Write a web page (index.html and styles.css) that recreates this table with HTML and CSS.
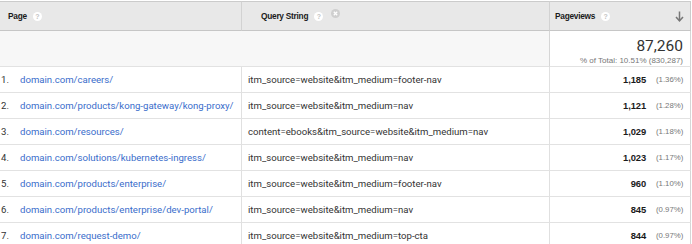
FILE: index.html
```html
<!DOCTYPE html>
<html>
<head>
<meta charset="utf-8">
<link rel="stylesheet" href="styles.css">
</head>
<body>
<div class="report">
  <div class="row head">
    <div class="cell c1"><span class="htitle">Page</span><span class="help">?</span></div>
    <div class="cell c2"><span class="htitle">Query String</span><span class="help">?</span>
      <svg class="remove" width="9" height="9" viewBox="0 0 9 9"><circle cx="4.5" cy="4.5" r="4.5" fill="#cfcfcf"/><path d="M2.8 2.8L6.2 6.2M6.2 2.8L2.8 6.2" stroke="#fff" stroke-width="1.3"/></svg>
    </div>
    <div class="cell c3"><span class="htitle">Pageviews</span><span class="help">?</span>
      <svg class="sort" width="9" height="11" viewBox="0 0 9 11"><path d="M4.5 0.5V9.5" stroke="#777" stroke-width="1.5"/><path d="M1 6L4.5 9.8L8 6" fill="none" stroke="#777" stroke-width="1.5"/></svg>
    </div>
  </div>
  <div class="row summary">
    <div class="cell c12"></div>
    <div class="cell c3 total">
      <div class="big">87,260</div>
      <div class="pct">% of Total: 10.51% (830,287)</div>
    </div>
  </div>
  <div class="row data"><div class="cell c1"><span class="idx">1.</span><a class="link">domain.com/careers/</a></div><div class="cell c2">itm_source=website&amp;itm_medium=footer-nav</div><div class="cell c3 val"><b>1,185</b><span class="share">(1.36%)</span></div></div>
  <div class="row data"><div class="cell c1"><span class="idx">2.</span><a class="link">domain.com/products/kong-gateway/kong-proxy/</a></div><div class="cell c2">itm_source=website&amp;itm_medium=nav</div><div class="cell c3 val"><b>1,121</b><span class="share">(1.28%)</span></div></div>
  <div class="row data"><div class="cell c1"><span class="idx">3.</span><a class="link">domain.com/resources/</a></div><div class="cell c2">content=ebooks&amp;itm_source=website&amp;itm_medium=nav</div><div class="cell c3 val"><b>1,029</b><span class="share">(1.18%)</span></div></div>
  <div class="row data"><div class="cell c1"><span class="idx">4.</span><a class="link">domain.com/solutions/kubernetes-ingress/</a></div><div class="cell c2">itm_source=website&amp;itm_medium=nav</div><div class="cell c3 val"><b>1,023</b><span class="share">(1.17%)</span></div></div>
  <div class="row data"><div class="cell c1"><span class="idx">5.</span><a class="link">domain.com/products/enterprise/</a></div><div class="cell c2">itm_source=website&amp;itm_medium=footer-nav</div><div class="cell c3 val"><b>960</b><span class="share">(1.10%)</span></div></div>
  <div class="row data"><div class="cell c1"><span class="idx">6.</span><a class="link">domain.com/products/enterprise/dev-portal/</a></div><div class="cell c2">itm_source=website&amp;itm_medium=nav</div><div class="cell c3 val"><b>845</b><span class="share">(0.97%)</span></div></div>
  <div class="row data"><div class="cell c1"><span class="idx">7.</span><a class="link">domain.com/request-demo/</a></div><div class="cell c2">itm_source=website&amp;itm_medium=top-cta</div><div class="cell c3 val"><b>844</b><span class="share">(0.97%)</span></div></div>
</div>
</body>
</html>
```
FILE: styles.css
```css
html, body { margin: 0; padding: 0; background: #fff; }
body { font-family: Roboto, "Liberation Sans", Arial, sans-serif; font-size: 9.6px; color: #333; }
.report { width: 691px; padding-top: 1px; }
.row { display: grid; grid-template-columns: 242px 308px 141px; }
.cell { box-sizing: border-box; display: flex; align-items: center; white-space: nowrap; overflow: hidden; }
.head { height: 30px; }
.head .cell { background: #e8e8e8; border-top: 1px solid #cbcbcb; border-bottom: 1px solid #c6c6c6; border-right: 1px solid #d2d2d2; font-family: "Liberation Sans", Arial, sans-serif; font-weight: bold; font-size: 8.3px; letter-spacing: -0.25px; color: #1a1a1a; }
.head .c1 { padding-left: 8px; }
.head .c2 { padding-left: 19px; }
.head .c3 { padding-left: 5px; border-right-color: #cbcbcb; }
.help { display: inline-block; flex-shrink: 0; width: 9px; height: 9px; border-radius: 50%; background: #fff; color: #c4c4c4; font-size: 7px; letter-spacing: 0; line-height: 9px; text-align: center; margin-left: 6px; font-weight: bold; }
.remove { flex-shrink: 0; margin-left: 8px; margin-top: -6px; }
.sort { flex-shrink: 0; margin-left: auto; margin-right: 6px; }
.summary { grid-template-columns: 550px 141px; height: 36px; }
.summary .c12 { background: #f7f7f7; border-right: 1px solid #d6d6d6; border-bottom: 1px solid #e2e2e2; }
.summary .total { background: #fff; border-right: 1px solid #d6d6d6; border-bottom: 1px solid #e2e2e2; flex-direction: column; align-items: flex-end; justify-content: flex-start; padding: 7px 7px 0 0; }
.big { font-size: 15.5px; line-height: 17px; color: #333; }
.pct { font-family: "Liberation Sans", Arial, sans-serif; font-size: 8px; line-height: 10px; color: #777; margin-top: 1px; }
.data { height: 26px; }
.data .cell { border-bottom: 1px solid #e2e2e2; border-right: 1px solid #e0e0e0; }
.data .c3 { border-right-color: #d6d6d6; }
.data .c2 { padding-left: 6px; color: #333; }
.idx { flex-shrink: 0; width: 20px; padding-left: 1px; box-sizing: border-box; color: #333; }
.link { color: #3a6dcb; text-decoration: none; }
.val { justify-content: flex-end; padding-right: 7px; }
.val b { font-family: "Liberation Sans", Arial, sans-serif; color: #1a1a1a; font-weight: bold; font-size: 9.4px; letter-spacing: -0.1px; }
.share { font-family: "Liberation Sans", Arial, sans-serif; font-size: 7.8px; color: #777; margin-left: 10px; width: 27px; text-align: right; }
```
